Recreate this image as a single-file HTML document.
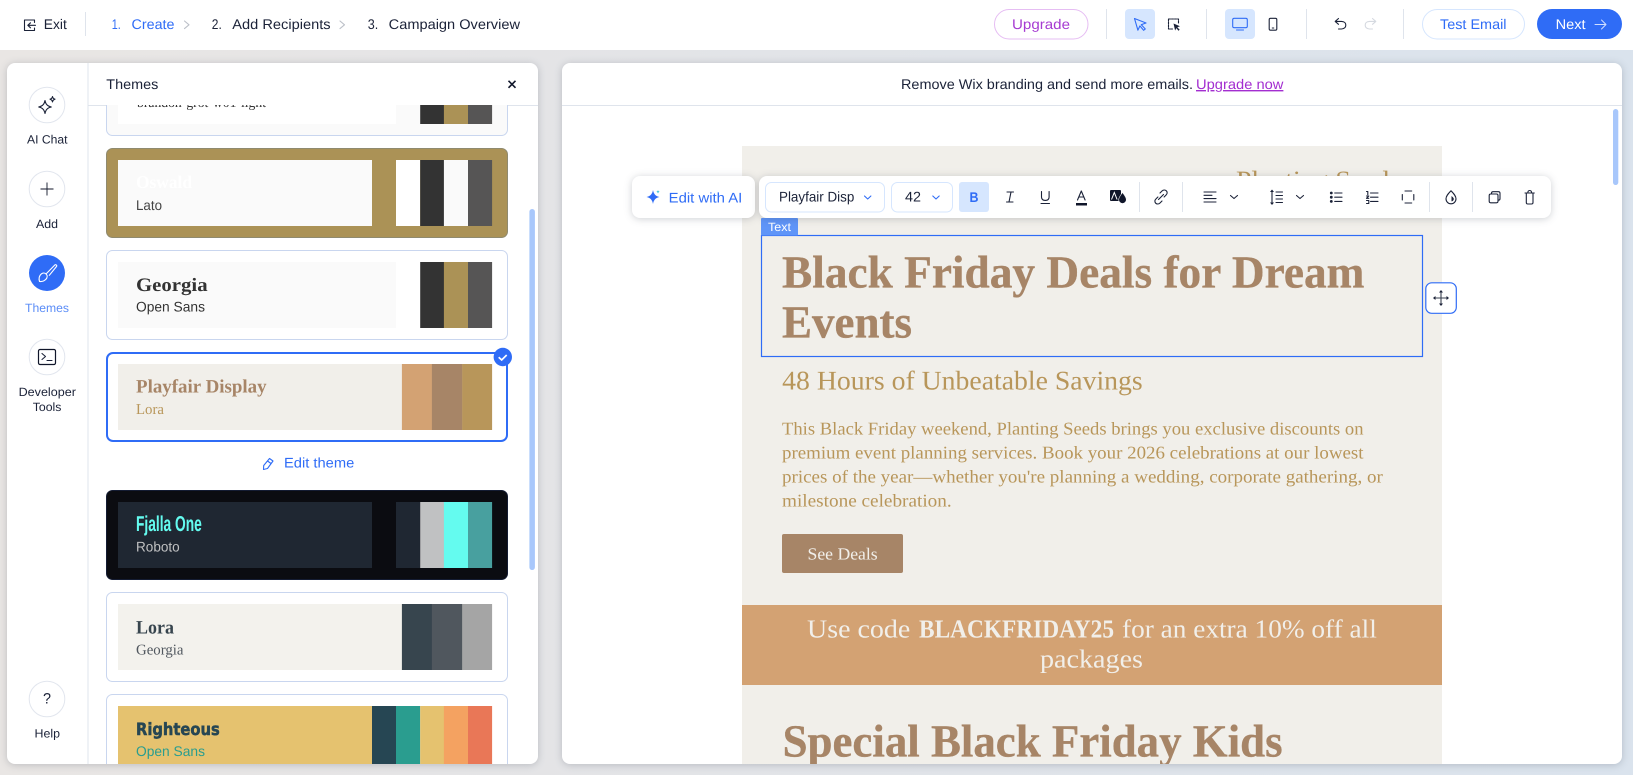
<!DOCTYPE html>
<html lang="en"><head><meta charset="utf-8"><title>Campaign editor</title>
<style>
html,body{margin:0;padding:0;width:1633px;height:775px;overflow:hidden;background:#e3e5e8}
svg{display:block;position:absolute;left:0;top:0}
text{font-family:"Liberation Sans",sans-serif;font-size:14px;fill:#1b2238;text-rendering:geometricPrecision;white-space:pre}
.s{font-family:"Liberation Serif",serif}
.l{font-size:12px}
.bl{fill:#2f6cf6}
.ic{fill:none;stroke:#1b2238;stroke-width:1.1;stroke-linecap:round;stroke-linejoin:round}
.sep{stroke:#dfe4ec;stroke-width:1}
.cb{stroke:#c9d6ef;stroke-width:1;fill:#fff}
.cir{fill:#fff;stroke:#e2e6ee;stroke-width:1}
.shadow{filter:drop-shadow(0 1px 4px rgba(30,40,60,.22))}
.b{font-weight:bold}
.h{fill:#a78567;font-size:46px;stroke:#a78567;stroke-width:.35}
</style></head><body>
<svg width="1633" height="775" viewBox="0 0 1633 775" xmlns="http://www.w3.org/2000/svg">
<defs>
<linearGradient id="bg" x1="0" x2="1" y1="0" y2="0"><stop offset="0" stop-color="#e9e6e4"/><stop offset=".4" stop-color="#e3e4e7"/><stop offset="1" stop-color="#dae3ed"/></linearGradient>
<clipPath id="pL"><rect x="7" y="105" width="531" height="659" /></clipPath>
<clipPath id="pR"><rect x="562" y="105" width="1060" height="659"/></clipPath>
</defs>
<rect width="1633" height="775" fill="url(#bg)"/>
<!-- top bar -->
<rect width="1633" height="50" fill="#fff"/>
<path class="ic" d="M34.500 22.500v-2.500H24.500v10.500h10v-2.500M35.500 25.300h-7.500M30.500 22.800l-2.700 2.500 2.700 2.500"/>
<text x="43.800" y="29" textLength="23" lengthAdjust="spacingAndGlyphs">Exit</text>
<line class="sep" x1="85.500" x2="85.500" y1="12" y2="36"/>
<text class="bl" x="111.800" y="29" textLength="9" lengthAdjust="spacingAndGlyphs">1.</text>
<text class="bl" x="131.500" y="29" textLength="43" lengthAdjust="spacingAndGlyphs">Create</text>
<path class="ic" style="stroke:#bcc0c8" d="M184.500 21l4.500 3.800-4.500 3.800"/>
<text x="211.800" y="29" textLength="10" lengthAdjust="spacingAndGlyphs">2.</text>
<text x="232.300" y="29" textLength="98.300" lengthAdjust="spacingAndGlyphs">Add Recipients</text>
<path class="ic" style="stroke:#bcc0c8" d="M340 21l4.500 3.800-4.500 3.800"/>
<text x="367.800" y="29" textLength="10.500" lengthAdjust="spacingAndGlyphs">3.</text>
<text x="388.700" y="29" textLength="131.300" lengthAdjust="spacingAndGlyphs">Campaign Overview</text>

<rect x="994.500" y="9.500" width="93.500" height="29.500" rx="14.700" fill="#fff" stroke="#e6bdf3"/>
<text x="1012" y="29" textLength="58" lengthAdjust="spacingAndGlyphs" style="fill:#a63bd2">Upgrade</text>
<line class="sep" x1="1106.500" x2="1106.500" y1="9" y2="39"/>
<rect x="1125" y="9" width="30" height="30" rx="4" fill="#d6e6fe"/>
<path class="ic" style="stroke:#2f6cf6" d="M1134.500 18.500l11.500 4.500-4.700 1.700 4 4.300-1.700 1.300-3.700-4.400-2 4.300z"/>
<path class="ic" stroke-dasharray="2 1" d="M1168.500 19h10v5M1168.500 19v10h4.500"/>
<path d="M1173.500 23.500l6.500 2.800-2.700 1 2.400 2.500-1.300 1-2-2.700-1.300 2.400z" fill="#1b2238"/>
<line class="sep" x1="1206.500" x2="1206.500" y1="9" y2="39"/>
<rect x="1225" y="9" width="30" height="30" rx="4" fill="#d6e6fe"/>
<path class="ic" style="stroke:#2f6cf6" d="M1232.700 19.800c0-1 .6-1.500 1.500-1.500h11.600c1 0 1.500.6 1.500 1.500v6.400c0 .9-.5 1.500-1.500 1.500h-11.600c-.9 0-1.500-.6-1.500-1.500zM1236.500 30h7"/>
<rect class="ic" x="1269.200" y="18.300" width="7.600" height="11.900" rx="1.300"/>
<line class="ic" x1="1272.300" x2="1273.700" y1="28" y2="28"/>
<line class="sep" x1="1306.500" x2="1306.500" y1="9" y2="39"/>
<path class="ic" d="M1338.500 18.500l-3.300 2.900 3.300 2.900M1335.500 21.400h6c2.900 0 4.300 1.700 4.300 3.700s-1.400 3.900-4.300 3.900h-3"/>
<path class="ic" style="stroke:#d5d9e0" d="M1372.500 18.500l3.300 2.900-3.300 2.900M1375.500 21.400h-6c-2.900 0-4.300 1.700-4.300 3.700s1.400 3.900 4.300 3.900h3"/>
<line class="sep" x1="1403.500" x2="1403.500" y1="9" y2="39"/>
<rect x="1422.500" y="9.500" width="102" height="29.500" rx="14.700" fill="#fff" stroke="#d6e6fe"/>
<text class="bl" x="1440" y="29" textLength="66.500" lengthAdjust="spacingAndGlyphs">Test Email</text>
<rect x="1537" y="9" width="85" height="30" rx="15" fill="#2f6cf6"/>
<text x="1555.600" y="29" textLength="30" lengthAdjust="spacingAndGlyphs" style="fill:#fff">Next</text>
<path class="ic" style="stroke:#cfdeff;stroke-width:1" d="M1595 24.500h11M1601.500 20l4.500 4.500-4.500 4.500"/>

<!-- left panel -->
<rect class="shadow" x="7" y="63" width="531" height="701" rx="8" fill="#fff"/>
<line class="sep" x1="88" x2="88" y1="63" y2="764"/>
<line class="sep" x1="88" x2="538" y1="105.500" y2="105.500"/>
<text x="106.300" y="89" textLength="52" lengthAdjust="spacingAndGlyphs">Themes</text>
<path d="M508.500 80.800l7 7M515.500 80.800l-7 7" stroke="#10162a" stroke-width="1.600" fill="none"/>

<circle class="cir" cx="47" cy="105" r="17.800"/>
<path class="ic" d="M45 100.500c.8 4 2.400 5.600 6.300 6.500-3.900.9-5.500 2.500-6.300 6.500-.8-4-2.400-5.600-6.300-6.500 3.900-.9 5.500-2.500 6.300-6.500zM52.500 96.500c.3 1.600 1 2.300 2.500 2.700-1.500.4-2.200 1.100-2.500 2.700-.3-1.600-1-2.300-2.500-2.700 1.500-.4 2.200-1.100 2.500-2.700z"/>
<text class="l" x="27" y="143.700" textLength="40.500" lengthAdjust="spacingAndGlyphs">AI Chat</text>
<circle class="cir" cx="47" cy="189" r="17.800"/>
<path d="M47 182.500v13M40.500 189h13" stroke="#10162a" stroke-width=".9" fill="none"/>
<text class="l" x="36" y="228" textLength="22" lengthAdjust="spacingAndGlyphs">Add</text>
<circle cx="47" cy="273" r="18" fill="#2f6cf6"/>
<path class="ic" style="stroke:#fff" d="M39.500 281.500c-1-3-.2-6 1.800-7.600 1.500-1.200 3.600-1.200 5 .3 1.300 1.500 1.100 3.600-.4 5.100-1.600 1.700-4 2.500-6.400 2.200zM46.500 273.500l8.300-8.500c1-.9 2.500.4 1.700 1.500l-7.200 8.800"/>
<text class="l" x="25" y="312" textLength="44" lengthAdjust="spacingAndGlyphs" style="fill:#5b8df7">Themes</text>
<circle class="cir" cx="47" cy="357" r="17.800"/>
<rect x="38.500" y="349.500" width="17" height="15" rx="1.500" fill="none" stroke="#10162a" stroke-width="1.200"/>
<path class="ic" d="M42 353.500l3.500 3-3.500 3M47 360.500h5"/>
<text class="l" x="18.600" y="396" textLength="57.300" lengthAdjust="spacingAndGlyphs">Developer</text>
<text class="l" x="32.800" y="411" textLength="28.600" lengthAdjust="spacingAndGlyphs">Tools</text>
<circle class="cir" cx="47" cy="699" r="17.800"/>
<text x="43" y="703.500" textLength="8" lengthAdjust="spacingAndGlyphs" style="font-size:15px">?</text>
<text class="l" x="34.500" y="737.700" textLength="25.500" lengthAdjust="spacingAndGlyphs">Help</text>

<g clip-path="url(#pL)">
<!-- card 1 -->
<rect x="106.500" y="70" width="401" height="65.500" rx="6" fill="#fafafa" stroke="#c9d6ef"/>
<rect x="118" y="70" width="278" height="54" fill="#fff"/>
<rect x="420.200" y="70" width="23.800" height="54" fill="#333"/><rect x="443.900" y="70" width="24.200" height="54" fill="#ab9256"/><rect x="468" y="70" width="24.100" height="54" fill="#565555"/>
<text class="s" x="137" y="107" textLength="129" lengthAdjust="spacingAndGlyphs" style="fill:#333">brandon-grot-w01-light</text>
<!-- card 2 -->
<rect x="106.500" y="148.500" width="401" height="89" rx="6" fill="#ab9256" stroke="#8f8a6f"/>
<rect x="118" y="160" width="254" height="66" fill="#fafafa"/>
<rect x="396" y="160" width="24.200" height="66" fill="#fff"/><rect x="420.200" y="160" width="23.800" height="66" fill="#333"/><rect x="443.900" y="160" width="24.200" height="66" fill="#fafafa"/><rect x="468" y="160" width="24.100" height="66" fill="#565555"/>
<text class="s b" x="136" y="188" textLength="56" lengthAdjust="spacingAndGlyphs" style="fill:#fff;font-size:18px">Oswald</text>
<text x="136" y="210" textLength="26" lengthAdjust="spacingAndGlyphs" style="fill:#444">Lato</text>
<!-- card 3 -->
<rect class="cb" x="106.500" y="250.500" width="401" height="89" rx="6"/>
<rect x="118" y="262" width="278" height="66" fill="#fafafa"/>
<rect x="420.200" y="262" width="23.800" height="66" fill="#333"/><rect x="443.900" y="262" width="24.200" height="66" fill="#ab9256"/><rect x="468" y="262" width="24.100" height="66" fill="#565555"/>
<text class="s b" x="136" y="291" textLength="71.600" lengthAdjust="spacingAndGlyphs" style="fill:#333;font-size:19px">Georgia</text>
<text x="136" y="311.700" textLength="69" lengthAdjust="spacingAndGlyphs" style="fill:#333">Open Sans</text>
<!-- card 4 -->
<rect x="107" y="353" width="400" height="88" rx="6" fill="#fff" stroke="#2f6cf6" stroke-width="2"/>
<rect x="118" y="364" width="284" height="66" fill="#f1efea"/>
<rect x="401.900" y="364" width="30.200" height="66" fill="#d3a273"/><rect x="431.900" y="364" width="30.500" height="66" fill="#a78567"/><rect x="462.200" y="364" width="29.900" height="66" fill="#b8965a"/>
<text class="s b" x="136" y="392.700" textLength="130.600" lengthAdjust="spacingAndGlyphs" style="fill:#a78567;font-size:19px">Playfair Display</text>
<text class="s" x="136" y="414" textLength="28" lengthAdjust="spacingAndGlyphs" style="fill:#b8965a;font-size:15px">Lora</text>
<circle cx="502.800" cy="357" r="9.200" fill="#2f6cf6"/>
<path d="M498.700 357.200l3 2.800 5-5" fill="none" stroke="#fff" stroke-width="1.700"/>
<path class="ic" style="stroke:#2f6cf6" d="M269.500 458.500l3.500 2.500-5.500 7.500-4 1 .2-4zM267.500 461l3.500 2.500"/>
<text class="bl" x="284" y="467.700" textLength="70.300" lengthAdjust="spacingAndGlyphs">Edit theme</text>
<!-- card 5 -->
<rect x="106.500" y="490.500" width="401" height="89" rx="6" fill="#0b0c11" stroke="#141c33"/>
<rect x="118" y="502" width="254" height="66" fill="#1f2732"/>
<rect x="396" y="502" width="24.200" height="66" fill="#1f2732"/><rect x="420.200" y="502" width="23.800" height="66" fill="#c0c1c2"/><rect x="443.900" y="502" width="24.200" height="66" fill="#64fbef"/><rect x="468" y="502" width="24.100" height="66" fill="#48a09f"/>
<text class="b" x="136" y="531" textLength="65.800" lengthAdjust="spacingAndGlyphs" style="fill:#64fbef;font-size:21.500px">Fjalla One</text>
<text x="136" y="551.700" textLength="43.700" lengthAdjust="spacingAndGlyphs" style="fill:#c0c1c2">Roboto</text>
<!-- card 6 -->
<rect class="cb" x="106.500" y="592.500" width="401" height="89" rx="6"/>
<rect x="118" y="604" width="284" height="66" fill="#f3f2ed"/>
<rect x="401.900" y="604" width="30.200" height="66" fill="#37454e"/><rect x="431.900" y="604" width="30.500" height="66" fill="#50575e"/><rect x="462.200" y="604" width="29.900" height="66" fill="#a5a5a5"/>
<text class="s b" x="136" y="633.300" textLength="38" lengthAdjust="spacingAndGlyphs" style="fill:#37454e;font-size:19px">Lora</text>
<text class="s" x="136" y="654.300" textLength="47.500" lengthAdjust="spacingAndGlyphs" style="fill:#50575e;font-size:15px">Georgia</text>
<!-- card 7 -->
<rect class="cb" x="106.500" y="694.500" width="401" height="89" rx="6"/>
<rect x="118" y="706" width="254" height="66" fill="#e5c26f"/>
<rect x="372" y="706" width="24.200" height="66" fill="#264653"/><rect x="396" y="706" width="24.200" height="66" fill="#2a9d8f"/><rect x="420.200" y="706" width="23.800" height="66" fill="#e5c26f"/><rect x="443.900" y="706" width="24.200" height="66" fill="#f4a261"/><rect x="468" y="706" width="24.100" height="66" fill="#e97757"/>
<text class="b" x="136" y="735" textLength="83.700" lengthAdjust="spacingAndGlyphs" style="font-family:'DejaVu Sans',sans-serif;fill:#264653;stroke:#264653;stroke-width:.5;font-size:17px">Righteous</text>
<text x="136" y="756" textLength="69" lengthAdjust="spacingAndGlyphs" style="fill:#2a9d8f">Open Sans</text>
</g>
<rect x="529.400" y="209" width="5.500" height="361" rx="2.700" fill="#a8c7fb"/>

<!-- right panel -->
<rect class="shadow" x="562" y="63" width="1060" height="701" rx="8" fill="#fff"/>
<line class="sep" x1="562" x2="1622" y1="105.500" y2="105.500"/>
<text x="901" y="89" textLength="292" lengthAdjust="spacingAndGlyphs">Remove Wix branding and send more emails.</text>
<text x="1196" y="89" textLength="87.400" lengthAdjust="spacingAndGlyphs" style="fill:#a32ed0;text-decoration:underline">Upgrade now</text>
<rect x="1613" y="109" width="5.300" height="76" rx="2.600" fill="#a8c7fb"/>

<g clip-path="url(#pR)">
<rect x="742" y="146" width="700" height="620" fill="#f1efea"/>
<text class="s" x="1236" y="188" textLength="164" lengthAdjust="spacingAndGlyphs" style="fill:#b8965a;font-size:25px">Planting Seeds</text>
<text class="s b h" x="782" y="287.700" textLength="582.400" lengthAdjust="spacingAndGlyphs">Black Friday Deals for Dream</text>
<text class="s b h" x="782" y="337.700" textLength="130" lengthAdjust="spacingAndGlyphs">Events</text>
<text class="s" x="782.200" y="389.300" textLength="360.500" lengthAdjust="spacingAndGlyphs" style="fill:#b8965a;font-size:27px">48 Hours of Unbeatable Savings</text>
<text class="s" x="782" y="434.500" textLength="581.500" lengthAdjust="spacingAndGlyphs" style="fill:#b8965a;font-size:18px">This Black Friday weekend, Planting Seeds brings you exclusive discounts on</text>
<text class="s" x="782" y="458.500" textLength="581.500" lengthAdjust="spacingAndGlyphs" style="fill:#b8965a;font-size:18px">premium event planning services. Book your 2026 celebrations at our lowest</text>
<text class="s" x="782" y="482.500" textLength="600.800" lengthAdjust="spacingAndGlyphs" style="fill:#b8965a;font-size:18px">prices of the year—whether you're planning a wedding, corporate gathering, or</text>
<text class="s" x="782" y="506.500" textLength="169.700" lengthAdjust="spacingAndGlyphs" style="fill:#b8965a;font-size:18px">milestone celebration.</text>
<rect x="782" y="534" width="121" height="39" rx="2" fill="#a78567"/>
<text class="s" x="807.500" y="559.300" textLength="70.200" lengthAdjust="spacingAndGlyphs" style="fill:#f1efea;font-size:17px">See Deals</text>
<rect x="742" y="605" width="700" height="80" fill="#d3a273"/>
<text class="s" x="807" y="637.700" textLength="103.300" lengthAdjust="spacingAndGlyphs" style="fill:#f1efea;font-size:26px">Use code</text>
<text class="s b" x="919" y="637.700" textLength="195" lengthAdjust="spacingAndGlyphs" style="fill:#f1efea;font-size:26px">BLACKFRIDAY25</text>
<text class="s" x="1122" y="637.700" textLength="254.800" lengthAdjust="spacingAndGlyphs" style="fill:#f1efea;font-size:26px">for an extra 10% off all</text>
<text class="s" x="1040" y="667.700" textLength="103" lengthAdjust="spacingAndGlyphs" style="fill:#f1efea;font-size:26px">packages</text>
<text class="s b h" x="782.600" y="756.700" textLength="500" lengthAdjust="spacingAndGlyphs">Special Black Friday Kids</text>
</g>

<!-- selection -->
<rect x="761.500" y="235.500" width="661" height="121" fill="none" stroke="#2f6cf6" stroke-width="1.200"/>
<rect x="761" y="218" width="37" height="17.500" rx="1" fill="#5f95f8"/>
<text class="l" x="768" y="231" textLength="23" lengthAdjust="spacingAndGlyphs" style="fill:#fff">Text</text>
<rect x="1425.800" y="282.800" width="30.500" height="30.500" rx="6" fill="#fff" stroke="#2f6cf6" stroke-width="1.200"/>
<path class="ic" style="stroke:#3a4150" d="M1441 291v14M1434 298h14"/>
<path d="M1441 290l2 2.500h-4zM1441 306l2-2.500h-4zM1433 298l2.500-2v4zM1449 298l-2.500-2v4z" fill="#1b2238"/>

<!-- toolbar -->
<rect class="shadow" x="632" y="176" width="123" height="42" rx="8" fill="#fff"/>
<path d="M653 190c.8 4.200 2.500 6 6.500 7-4 1-5.700 2.800-6.500 7-.8-4.200-2.500-6-6.500-7 4-1 5.700-2.800 6.500-7z" fill="#2f6cf6"/>
<path d="M658 190c.2 1 .7 1.500 1.700 1.800-1 .3-1.500.8-1.700 1.800-.2-1-.7-1.500-1.700-1.800 1-.3 1.500-.8 1.700-1.800z" fill="#35c4d8"/>
<text class="bl" x="668.700" y="202.300" textLength="73.600" lengthAdjust="spacingAndGlyphs">Edit with AI</text>
<rect class="shadow" x="759" y="176" width="792" height="42" rx="8" fill="#fff"/>
<rect x="765.500" y="182.500" width="119" height="29.500" rx="6" fill="#fff" stroke="#d6e6fe"/>
<text x="779" y="201.700" textLength="75.300" lengthAdjust="spacingAndGlyphs">Playfair Disp</text>
<path class="ic" style="stroke:#2f6cf6" d="M864.500 196l3.200 3 3.200-3"/>
<rect x="891.500" y="182.500" width="61" height="29.500" rx="6" fill="#fff" stroke="#d6e6fe"/>
<text x="905" y="201.700" textLength="16" lengthAdjust="spacingAndGlyphs">42</text>
<path class="ic" style="stroke:#2f6cf6" d="M932.800 196l3.200 3 3.200-3"/>
<rect x="959" y="182" width="30" height="30" rx="3" fill="#d6e6fe"/>
<text class="b bl" x="969.500" y="202" textLength="9" lengthAdjust="spacingAndGlyphs">B</text>
<path class="ic" d="M1007 192h6.500M1006.500 202h6.500M1011 192l-2 10"/>
<path class="ic" d="M1041.500 191.500v5.500c0 2.300 1.500 3.400 3.800 3.400s3.800-1.100 3.800-3.400v-5.500M1041 203.500h8.500"/>
<path class="ic" d="M1077.500 200l3.800-9 3.800 9M1078.800 197h5"/>
<rect x="1076" y="203" width="11" height="2.500" fill="#10162a"/>
<rect x="1110" y="190" width="11" height="11" rx="1" fill="#10162a"/>
<path d="M1111.500 199.500l2.800-7 2.800 7" fill="none" stroke="#fff" stroke-width="1"/>
<path d="M1122.500 192.500c2.300 3 3.800 5 3.800 7.200a3.800 3.800 0 0 1-7.600 0c0-2.200 1.500-4.200 3.800-7.200z" fill="#10162a" stroke="#fff" stroke-width=".6"/>
<line class="sep" x1="1139.500" x2="1139.500" y1="182" y2="212"/>
<path class="ic" d="M1160 193l2-2c1.400-1.300 3.200-1.300 4.300-.2 1.200 1.100 1.100 3-.2 4.200l-2 2M1162 201l-2 2c-1.400 1.300-3.200 1.300-4.300.2-1.100-1.100-1.100-3 .2-4.200l2-2M1158.500 199.500l5-5"/>
<line class="sep" x1="1182.500" x2="1182.500" y1="182" y2="212"/>
<path class="ic" d="M1204 192h12M1204 195.300h8M1204 198.600h12M1204 202h12"/>
<path class="ic" d="M1230.500 195.500l3.500 3 3.500-3"/>
<path class="ic" d="M1272 191v12.500M1276 192h6.500M1276 195.500h6.500M1276 199h6.500M1276 202.500h6.500"/>
<path d="M1272 189.500l2 2.500h-4zM1272 205l2-2.500h-4z" fill="#1b2238"/>
<path class="ic" d="M1296.500 195.500l3.500 3 3.500-3"/>
<path class="ic" d="M1334.700 193h7.300M1334.700 197.200h7.300M1334.700 201.400h7.300"/>
<circle cx="1331.300" cy="193" r="1.400" fill="#1b2238"/><circle cx="1331.300" cy="197.200" r="1.400" fill="#1b2238"/><circle cx="1331.300" cy="201.400" r="1.400" fill="#1b2238"/>
<path class="ic" d="M1370.500 193h7.500M1370.500 197.200h7.500M1370.500 201.400h7.500M1366.500 191.500h1.300v3.200M1366.500 196h2.300l-2.300 2.300h2.300M1366.500 200.500h2.300v3h-2.300"/>
<path class="ic" d="M1405 191h6.700M1405 203h6.700M1402.300 194.500v5.500M1413.800 194.500v5.500"/>
<line class="sep" x1="1429.500" x2="1429.500" y1="182" y2="212"/>
<path class="ic" d="M1451 190.800c3 3.100 5 5.400 5 8a5 5 0 0 1-10 0c0-2.600 2-4.900 5-8z"/>
<path d="M1451.500 196c1.500 1.200 2.300 2 2.300 3s-.8 2.200-2.300 2.400z" fill="#1b2238"/>
<line class="sep" x1="1472.500" x2="1472.500" y1="182" y2="212"/>
<path class="ic" d="M1491.500 193.500v-.2c0-1 .6-1.600 1.600-1.600h5.300c1 0 1.600.6 1.600 1.600v5.300c0 1-.6 1.600-1.600 1.600"/>
<rect class="ic" x="1489.200" y="194" width="8.800" height="8.800" rx="1.500" style="fill:#fff"/>
<path class="ic" d="M1525 193h9.300M1526.300 193v9.500c0 1 .5 1.500 1.500 1.500h3.700c1 0 1.500-.5 1.500-1.500V193M1527.800 193c0-1.600.5-2.500 1.900-2.500s1.900.9 1.900 2.500"/>
</svg>
</body></html>
